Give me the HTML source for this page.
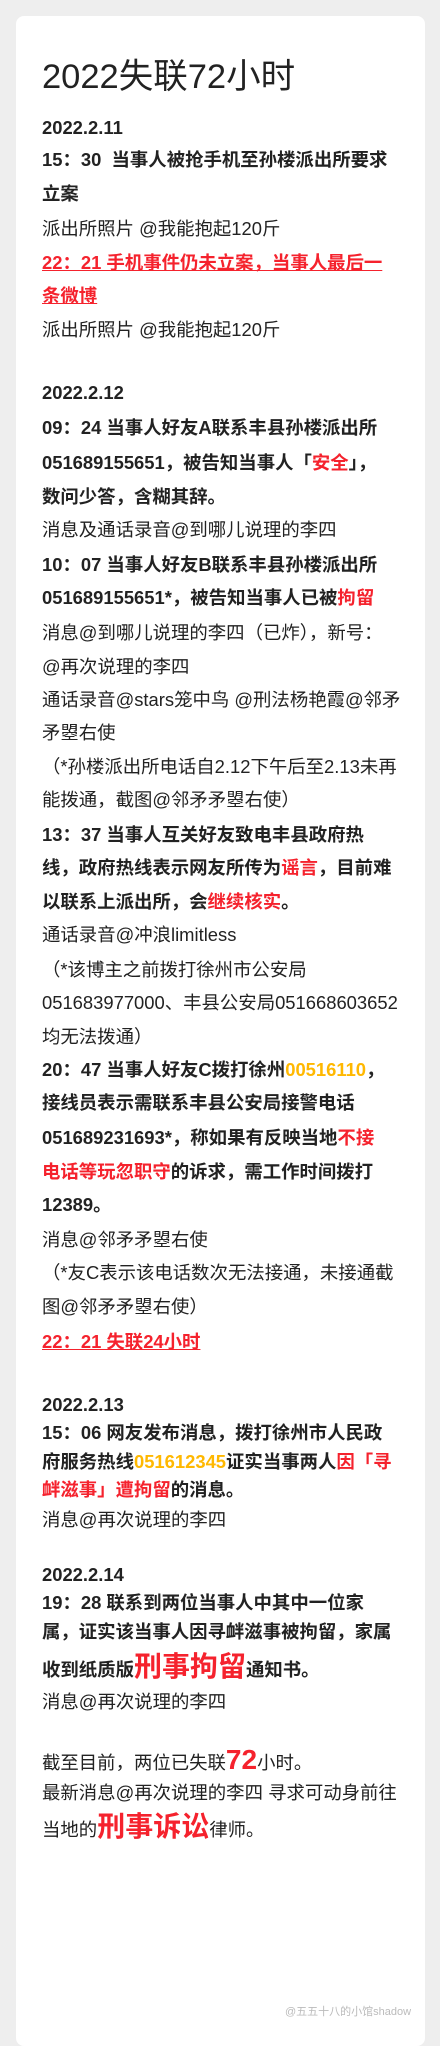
<!DOCTYPE html>
<html><head><meta charset="utf-8"><style>
html,body{margin:0;padding:0;}
body{width:440px;height:2018px;background:#eeeeee;position:relative;overflow:hidden;font-family:"Liberation Sans","Noto Sans CJK SC",sans-serif;color:#222;}
.card{position:absolute;left:16px;top:16px;width:409px;height:2030px;background:#fff;border-radius:8px;}
.l{position:absolute;left:42px;height:34px;line-height:34px;font-size:18.4px;white-space:nowrap;}
.b{font-weight:bold;}
.r{color:#f5222d;}
.y{color:#ffb800;}
.u{text-decoration:underline;}
.big{font-size:28px;font-weight:bold;}
</style></head><body>
<div class="card"></div>
<div class="l" style="top:53px;height:48px;line-height:48px;font-size:34.5px;">2022失联72小时</div>
<div class="l b" style="top:111px">2022.2.11</div>
<div class="l b" style="top:143px">15：30 &nbsp;当事人被抢手机至孙楼派出所要求</div>
<div class="l b" style="top:177px">立案</div>
<div class="l" style="top:212px">派出所照片 @我能抱起120斤</div>
<div class="l b r u" style="top:246px">22：21 手机事件仍未立案，当事人最后一</div>
<div class="l b r u" style="top:279px">条微博</div>
<div class="l" style="top:313px">派出所照片 @我能抱起120斤</div>
<div class="l b" style="top:376px">2022.2.12</div>
<div class="l b" style="top:411px">09：24 当事人好友A联系丰县孙楼派出所</div>
<div class="l b" style="top:446px">051689155651，被告知当事人「<span class="r">安全</span>」，</div>
<div class="l b" style="top:480px">数问少答，含糊其辞。</div>
<div class="l" style="top:513px">消息及通话录音@到哪儿说理的李四</div>
<div class="l b" style="top:548px">10：07 当事人好友B联系丰县孙楼派出所</div>
<div class="l b" style="top:581px">051689155651*，被告知当事人已被<span class="r">拘留</span></div>
<div class="l" style="top:616px">消息@到哪儿说理的李四（已炸），新号：</div>
<div class="l" style="top:650px">@再次说理的李四</div>
<div class="l" style="top:683px">通话录音@stars笼中鸟 @刑法杨艳霞@邻矛</div>
<div class="l" style="top:716px">矛曌右使</div>
<div class="l" style="top:750px">（*孙楼派出所电话自2.12下午后至2.13未再</div>
<div class="l" style="top:783px">能拨通，截图@邻矛矛曌右使）</div>
<div class="l b" style="top:818px">13：37 当事人互关好友致电丰县政府热</div>
<div class="l b" style="top:851px">线，政府热线表示网友所传为<span class="r">谣言</span>，目前难</div>
<div class="l b" style="top:885px">以联系上派出所，会<span class="r">继续核实</span>。</div>
<div class="l" style="top:918px">通话录音@冲浪limitless</div>
<div class="l" style="top:953px">（*该博主之前拨打徐州市公安局</div>
<div class="l" style="top:986px">051683977000、丰县公安局051668603652</div>
<div class="l" style="top:1020px">均无法拨通）</div>
<div class="l b" style="top:1053px">20：47 当事人好友C拨打徐州<span class="y">00516110</span>，</div>
<div class="l b" style="top:1086px">接线员表示需联系丰县公安局接警电话</div>
<div class="l b" style="top:1121px">051689231693*，称如果有反映当地<span class="r">不接</span></div>
<div class="l b" style="top:1155px"><span class="r">电话等玩忽职守</span>的诉求，需工作时间拨打</div>
<div class="l b" style="top:1188px">12389。</div>
<div class="l" style="top:1223px">消息@邻矛矛曌右使</div>
<div class="l" style="top:1256px">（*友C表示该电话数次无法接通，未接通截</div>
<div class="l" style="top:1290px">图@邻矛矛曌右使）</div>
<div class="l b r u" style="top:1325px">22：21 失联24小时</div>
<div class="l b" style="top:1388px">2022.2.13</div>
<div class="l b" style="top:1416px">15：06 网友发布消息，拨打徐州市人民政</div>
<div class="l b" style="top:1445px">府服务热线<span class="y">051612345</span>证实当事两人<span class="r">因「寻</span></div>
<div class="l b" style="top:1473px"><span class="r">衅滋事」遭拘留</span>的消息。</div>
<div class="l" style="top:1503px">消息@再次说理的李四</div>
<div class="l b" style="top:1558px">2022.2.14</div>
<div class="l b" style="top:1586px">19：28 联系到两位当事人中其中一位家</div>
<div class="l b" style="top:1615px">属，证实该当事人因寻衅滋事被拘留，家属</div>
<div class="l b" style="top:1650px">收到纸质版<span class="r big">刑事拘留</span>通知书。</div>
<div class="l" style="top:1685px">消息@再次说理的李四</div>
<div class="l" style="top:1743px">截至目前，两位已失联<span class="r big">72</span>小时。</div>
<div class="l" style="top:1776px">最新消息@再次说理的李四 寻求可动身前往</div>
<div class="l" style="top:1810px">当地的<span class="r big">刑事诉讼</span>律师。</div>
<div style="position:absolute;left:285px;top:2003px;font-size:11px;color:#bbb;white-space:nowrap;">@五五十八的小馆shadow</div>
</body></html>
